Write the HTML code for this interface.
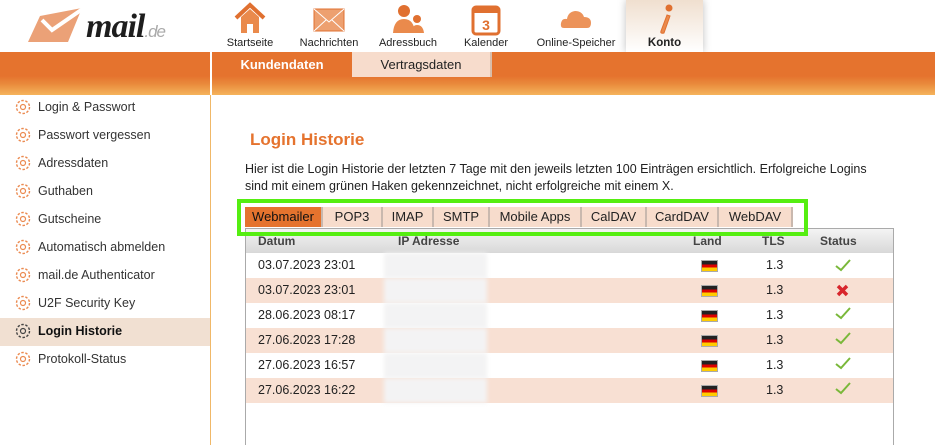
<!DOCTYPE html>
<html><head><meta charset="utf-8"><style>
*{margin:0;padding:0;box-sizing:border-box}
body{width:935px;height:445px;overflow:hidden;background:#fff;font-family:"Liberation Sans",Arial,sans-serif;font-size:12px;color:#222;position:relative}
.abs{position:absolute}
.band{left:0;top:52px;width:935px;height:43px;background:linear-gradient(#e5732e 0,#e5732e 24px,#e98a3c 32px,#f5b45c 43px)}
.nav{top:0;text-align:center;font-size:11px;color:#222}
.nav span{position:absolute;left:0;right:0;top:37px}
.side div{position:absolute;left:14px;height:28px;line-height:29px;font-size:12.5px;color:#333;padding-left:24px;width:196px}
.side svg{position:absolute;left:0;top:5px}
.tab{position:absolute;top:207px;height:20px;line-height:20px;text-align:center;background:#f7dccc;border-right:2px solid #c9b8ae;font-size:13px;color:#222}
.row{position:absolute;left:246px;width:647px;height:25px;line-height:25px;font-size:12.5px}
.row .d{position:absolute;left:12px}
.flag{position:absolute;left:456px;top:8px;width:15px;height:10px;background:linear-gradient(#222 0 33%,#d00 33% 66%,#fc0 66%);box-shadow:0 0 0 1px #aaa}
.ip{position:absolute;left:138px;top:0;width:103px;height:25px;background:#f3f3f4;filter:blur(2px)}
</style></head><body>
<svg class="abs" style="left:28px;top:6px" width="62" height="38" viewBox="0 0 62 38"><path d="M12 10 L54 2 L40 36 L0 36 Z" fill="#eba177"/><path d="M14 14 L24 24 L56 2" stroke="#fff" stroke-width="4" fill="none"/></svg>
<div class="abs" style="left:86px;top:8px;font:italic bold 34px 'Liberation Serif',serif;color:#1e1e1e;letter-spacing:-1px">mail<span style="font:italic 17px 'Liberation Sans',sans-serif;color:#aaa">.de</span></div>
<div class="abs" style="left:626px;top:0;width:77px;height:52px;background:linear-gradient(#f0dfcf,#fff);box-shadow:0 0 8px rgba(0,0,0,.25)"></div>
<div class="abs nav" style="left:218px;width:64px;height:52px"><svg width="34" height="34" viewBox="0 0 34 34" style="margin-top:2px"><path d="M3 16 L17 3 L31 16" stroke="#e07030" stroke-width="4" fill="none"/><path d="M8 15 V31 H14 V22 H20 V31 H26 V15 L17 7Z" fill="#ea8a4c"/></svg><span>Startseite</span></div>
<div class="abs nav" style="left:296px;width:66px;height:52px"><svg width="34" height="34" viewBox="0 0 34 34" style="margin-top:2px"><rect x="2" y="7" width="30" height="22" fill="#eda070" stroke="#e07030"/><path d="M2 7 L17 20 L32 7 M2 29 L14 18 M32 29 L20 18" stroke="#fff" fill="none"/></svg><span>Nachrichten</span></div>
<div class="abs nav" style="left:374px;width:68px;height:52px"><svg width="34" height="34" viewBox="0 0 34 34" style="margin-top:2px"><circle cx="13" cy="9" r="6" fill="#e07030"/><path d="M2 31 Q3 17 13 17 Q23 17 24 31Z" fill="#ea8a4c"/><circle cx="26" cy="17" r="4" fill="#e07030"/><path d="M20 31 Q21 23 26 23 Q32 23 33 31Z" fill="#ea8a4c"/></svg><span>Adressbuch</span></div>
<div class="abs nav" style="left:458px;width:56px;height:52px"><svg width="34" height="34" viewBox="0 0 34 34" style="margin-top:2px"><rect x="4" y="5" width="26" height="27" rx="3" fill="#fff" stroke="#e07030" stroke-width="3"/><rect x="4" y="5" width="26" height="6" fill="#e07030"/><text x="17" y="28" font-size="14" font-weight="bold" fill="#e07030" text-anchor="middle" font-family="Liberation Sans">3</text></svg><span>Kalender</span></div>
<div class="abs nav" style="left:534px;width:84px;height:52px"><svg width="34" height="34" viewBox="0 0 34 34" style="margin-top:2px"><path d="M5 26 Q1 26 2 21 Q3 16 8 17 Q9 10 16 9 Q23 9 25 15 Q32 15 32 21 Q32 26 28 26Z" fill="#ec935a"/></svg><span>Online-Speicher</span></div>
<div class="abs nav" style="left:626px;width:77px;height:52px"><svg width="34" height="34" viewBox="0 0 34 34" style="margin-top:2px"><circle cx="21" cy="6" r="3.5" fill="#e07030"/><path d="M19 13 L13 29 Q12 32 16 31 L22 14Z" fill="#ea8a4c" stroke="#e07030"/></svg><span style="font-weight:bold;font-size:11.5px">Konto</span></div>
<div class="abs band"></div>
<div class="abs" style="left:210px;top:52px;width:2px;height:393px;background:#fff"></div>
<div class="abs" style="left:210px;top:95px;width:1px;height:350px;background:#f0b868"></div>
<div class="abs" style="left:212px;top:52px;width:140px;height:25px;line-height:25px;text-align:center;color:#fff;font-weight:bold;font-size:13px">Kundendaten</div>
<div class="abs" style="left:352px;top:52px;width:140px;height:25px;line-height:25px;text-align:center;background:#f7dccc;font-size:13px;color:#222;border-right:2px solid #d9bdaa">Vertragsdaten</div>
<div class="abs" style="left:0;top:318px;width:210px;height:28px;background:#f1e0d2"></div>
<div class="side">
<div style="top:93px"><svg width="18" height="18" viewBox="0 0 18 18"><circle cx="9" cy="9" r="6.5" fill="none" stroke="#eb8a50" stroke-width="1.4" stroke-dasharray="2.5 1.6"/><circle cx="9" cy="9" r="2.5" fill="none" stroke="#eb8a50" stroke-width="1.2"/></svg>Login &amp; Passwort</div>
<div style="top:121px"><svg width="18" height="18" viewBox="0 0 18 18"><circle cx="9" cy="9" r="6.5" fill="none" stroke="#eb8a50" stroke-width="1.4" stroke-dasharray="2.5 1.6"/><circle cx="9" cy="9" r="2.5" fill="none" stroke="#eb8a50" stroke-width="1.2"/></svg>Passwort vergessen</div>
<div style="top:149px"><svg width="18" height="18" viewBox="0 0 18 18"><circle cx="9" cy="9" r="6.5" fill="none" stroke="#eb8a50" stroke-width="1.4" stroke-dasharray="2.5 1.6"/><circle cx="9" cy="9" r="2.5" fill="none" stroke="#eb8a50" stroke-width="1.2"/></svg>Adressdaten</div>
<div style="top:177px"><svg width="18" height="18" viewBox="0 0 18 18"><circle cx="9" cy="9" r="6.5" fill="none" stroke="#eb8a50" stroke-width="1.4" stroke-dasharray="2.5 1.6"/><circle cx="9" cy="9" r="2.5" fill="none" stroke="#eb8a50" stroke-width="1.2"/></svg>Guthaben</div>
<div style="top:205px"><svg width="18" height="18" viewBox="0 0 18 18"><circle cx="9" cy="9" r="6.5" fill="none" stroke="#eb8a50" stroke-width="1.4" stroke-dasharray="2.5 1.6"/><circle cx="9" cy="9" r="2.5" fill="none" stroke="#eb8a50" stroke-width="1.2"/></svg>Gutscheine</div>
<div style="top:233px"><svg width="18" height="18" viewBox="0 0 18 18"><circle cx="9" cy="9" r="6.5" fill="none" stroke="#eb8a50" stroke-width="1.4" stroke-dasharray="2.5 1.6"/><circle cx="9" cy="9" r="2.5" fill="none" stroke="#eb8a50" stroke-width="1.2"/></svg>Automatisch abmelden</div>
<div style="top:261px"><svg width="18" height="18" viewBox="0 0 18 18"><circle cx="9" cy="9" r="6.5" fill="none" stroke="#eb8a50" stroke-width="1.4" stroke-dasharray="2.5 1.6"/><circle cx="9" cy="9" r="2.5" fill="none" stroke="#eb8a50" stroke-width="1.2"/></svg>mail.de Authenticator</div>
<div style="top:289px"><svg width="18" height="18" viewBox="0 0 18 18"><circle cx="9" cy="9" r="6.5" fill="none" stroke="#eb8a50" stroke-width="1.4" stroke-dasharray="2.5 1.6"/><circle cx="9" cy="9" r="2.5" fill="none" stroke="#eb8a50" stroke-width="1.2"/></svg>U2F Security Key</div>
<div style="top:317px;font-weight:bold;color:#111"><svg width="18" height="18" viewBox="0 0 18 18"><circle cx="9" cy="9" r="6.5" fill="none" stroke="#444" stroke-width="1.4" stroke-dasharray="2.5 1.6"/><circle cx="9" cy="9" r="2.5" fill="none" stroke="#444" stroke-width="1.2"/></svg>Login Historie</div>
<div style="top:345px"><svg width="18" height="18" viewBox="0 0 18 18"><circle cx="9" cy="9" r="6.5" fill="none" stroke="#eb8a50" stroke-width="1.4" stroke-dasharray="2.5 1.6"/><circle cx="9" cy="9" r="2.5" fill="none" stroke="#eb8a50" stroke-width="1.2"/></svg>Protokoll-Status</div>
</div>
<div class="abs" style="left:250px;top:130px;font-size:17px;font-weight:bold;color:#e5732e">Login Historie</div>
<div class="abs" style="left:245px;top:161px;width:640px;font-size:12.5px;line-height:17px;color:#222">Hier ist die Login Historie der letzten 7 Tage mit den jeweils letzten 100 Einträgen ersichtlich. Erfolgreiche Logins sind mit einem grünen Haken gekennzeichnet, nicht erfolgreiche mit einem X.</div>
<div class="tab" style="left:245px;width:78px;background:#e5732e;color:#111">Webmailer</div>
<div class="tab" style="left:323px;width:60px">POP3</div>
<div class="tab" style="left:383px;width:51px">IMAP</div>
<div class="tab" style="left:434px;width:56px">SMTP</div>
<div class="tab" style="left:490px;width:92px">Mobile Apps</div>
<div class="tab" style="left:582px;width:65px">CalDAV</div>
<div class="tab" style="left:647px;width:72px">CardDAV</div>
<div class="tab" style="left:719px;width:74px">WebDAV</div>
<div class="abs" style="left:245px;top:228px;width:649px;height:217px;border:1px solid #aaa;border-bottom:none"></div>
<div class="abs" style="left:246px;top:229px;width:647px;height:24px;background:linear-gradient(#f4f4f4,#d8d8d8);font-weight:bold;font-size:12px;color:#444;line-height:24px">
<span class="abs" style="left:12px;top:0">Datum</span><span class="abs" style="left:152px;top:0">IP Adresse</span><span class="abs" style="left:447px;top:0">Land</span><span class="abs" style="left:516px;top:0">TLS</span><span class="abs" style="left:574px;top:0">Status</span></div>
<div class="abs" style="left:237px;top:199px;width:571px;height:37px;border:4px solid #55ee11"></div>
<div class="row" style="top:253px;background:#fff"><div class="ip"></div><span class="d">03.07.2023 23:01</span><div class="flag"></div><span class="abs" style="left:520px">1.3</span><svg class="abs" style="left:589px;top:5px" width="16" height="14"><path d="M1 8 L6 12 L15 2" stroke="#7ab83a" stroke-width="2" fill="none"/></svg></div>
<div class="row" style="top:278px;background:#f8e0d3"><div class="ip"></div><span class="d">03.07.2023 23:01</span><div class="flag"></div><span class="abs" style="left:520px">1.3</span><svg class="abs" style="left:590px;top:6px" width="13" height="13"><path d="M2 2 L11 11 M11 2 L2 11" stroke="#d8262c" stroke-width="3.5"/></svg></div>
<div class="row" style="top:303px;background:#fff"><div class="ip"></div><span class="d">28.06.2023 08:17</span><div class="flag"></div><span class="abs" style="left:520px">1.3</span><svg class="abs" style="left:589px;top:3px" width="16" height="14"><path d="M1 8 L6 12 L15 2" stroke="#7ab83a" stroke-width="2" fill="none"/></svg></div>
<div class="row" style="top:328px;background:#f8e0d3"><div class="ip"></div><span class="d">27.06.2023 17:28</span><div class="flag"></div><span class="abs" style="left:520px">1.3</span><svg class="abs" style="left:589px;top:3px" width="16" height="14"><path d="M1 8 L6 12 L15 2" stroke="#7ab83a" stroke-width="2" fill="none"/></svg></div>
<div class="row" style="top:353px;background:#fff"><div class="ip"></div><span class="d">27.06.2023 16:57</span><div class="flag"></div><span class="abs" style="left:520px">1.3</span><svg class="abs" style="left:589px;top:3px" width="16" height="14"><path d="M1 8 L6 12 L15 2" stroke="#7ab83a" stroke-width="2" fill="none"/></svg></div>
<div class="row" style="top:378px;background:#f8e0d3"><div class="ip"></div><span class="d">27.06.2023 16:22</span><div class="flag"></div><span class="abs" style="left:520px">1.3</span><svg class="abs" style="left:589px;top:3px" width="16" height="14"><path d="M1 8 L6 12 L15 2" stroke="#7ab83a" stroke-width="2" fill="none"/></svg></div>
</body></html>
